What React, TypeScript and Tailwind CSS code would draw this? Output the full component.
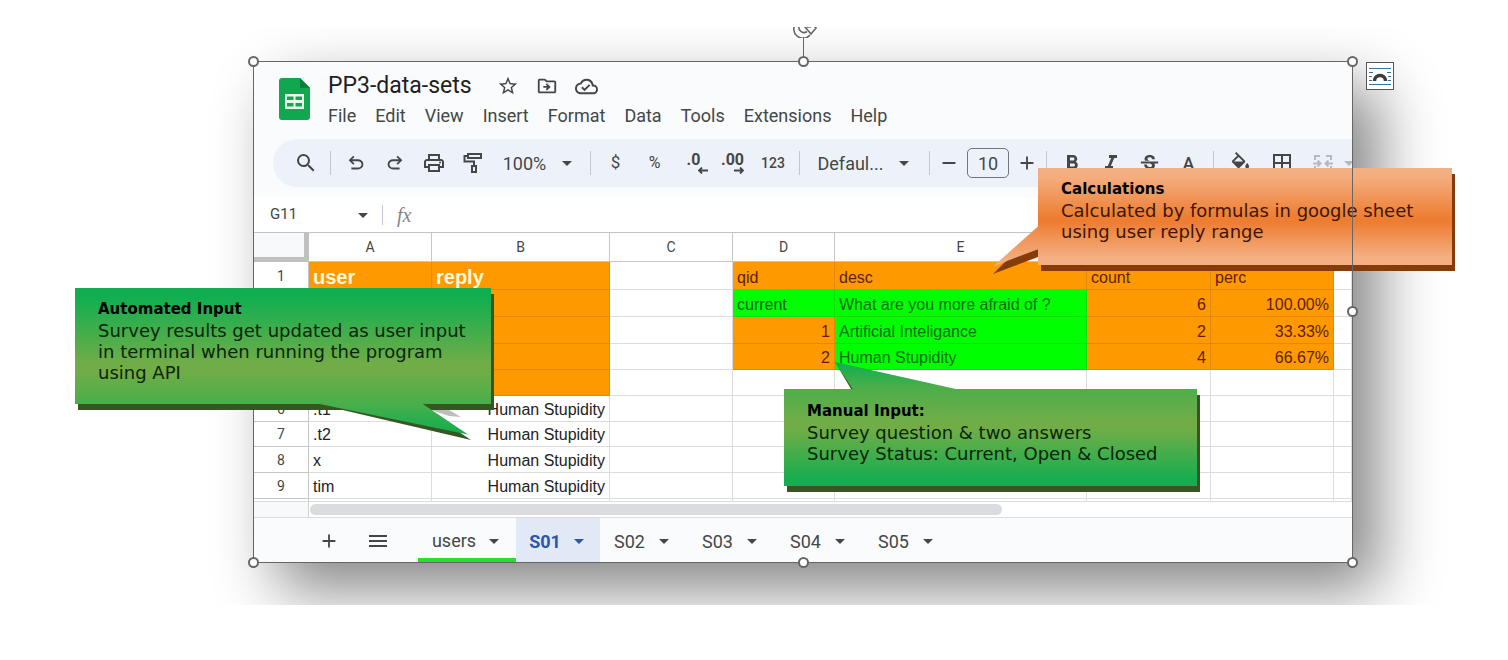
import type { ReactNode } from "react";
import {
  MdAdd,
  MdArrowDropDown,
  MdBorderAll,
  MdFormatBold,
  MdFormatColorFill,
  MdFormatItalic,
  MdMenu,
  MdOutlineCloudDone,
  MdOutlineDriveFileMove,
  MdOutlinePrint,
  MdRemove,
  MdSearch,
  MdStarBorder,
  MdStrikethroughS,
} from "react-icons/md";

const menus = ["File", "Edit", "View", "Insert", "Format", "Data", "Tools", "Extensions", "Help"];
const tabs = ["S02", "S03", "S04", "S05"];
const columns = ["A", "B", "C", "D", "E", "", "", ""];

type Row = { n: number; label: string; height: string; cells: string[] };

const rows: Row[] = [
  { n: 1, label: "1", height: "h-[28px]", cells: ["user", "reply", "", "qid", "desc", "count", "perc", ""] },
  { n: 2, label: "", height: "h-[27px]", cells: ["", "", "", "current", "What are you more afraid of ?", "6", "100.00%", ""] },
  { n: 3, label: "", height: "h-[27px]", cells: ["", "", "", "1", "Artificial Inteligance", "2", "33.33%", ""] },
  { n: 4, label: "", height: "h-[26px]", cells: ["", "", "", "2", "Human Stupidity", "4", "66.67%", ""] },
  { n: 5, label: "", height: "h-[26px]", cells: ["", "", "", "", "", "", "", ""] },
  { n: 6, label: "6", height: "h-[26px]", cells: [".t1", "Human Stupidity", "", "", "", "", "", ""] },
  { n: 7, label: "7", height: "h-[25px]", cells: [".t2", "Human Stupidity", "", "", "", "", "", ""] },
  { n: 8, label: "8", height: "h-[26px]", cells: ["x", "Human Stupidity", "", "", "", "", "", ""] },
  { n: 9, label: "9", height: "h-[26px]", cells: ["tim", "Human Stupidity", "", "", "", "", "", ""] },
];

function cellStyle(row: number, col: number): string {
  const orange = "bg-[#ff9900] border-[#e08a08]";
  const green = "bg-[#00ff00] border-[#0ce00c]";
  let style = "border-[#dcdcdc] text-[#222]";
  if (col < 2 && row <= 5) style = `${orange} text-[#222]`;
  if (col >= 3 && col <= 6 && row <= 4) style = `${orange} text-[#5b1f00]`;
  if (col === 3 && row === 2) style = `${green} text-[#0b5d10]`;
  if (col === 4 && row >= 2 && row <= 4) style = `${green} text-[#0b6d10]`;
  if (row === 1 && col < 2) return `${orange} text-[20px] font-bold text-[#fff8dc]`;
  const right =
    (col === 1 && row >= 6) || (col === 3 && row > 2) || (col > 4 && row > 1);
  return `${style} text-[16px] ${right ? "text-right" : "text-left"}`;
}

function Tool({ label, width = "w-[39px]", children }: { label: string; width?: string; children: ReactNode }) {
  return (
    <button type="button" aria-label={label} className={`flex h-[36px] shrink-0 items-center justify-center ${width}`}>
      {children}
    </button>
  );
}

function Separator() {
  return <span className="mx-[5px] h-[24px] w-px shrink-0 bg-[#c3c7cf]" />;
}

function Caret() {
  return <MdArrowDropDown size={24} className="shrink-0" />;
}

function UndoIcon({ flip = false }: { flip?: boolean }) {
  return (
    <svg viewBox="0 -960 960 960" className={`size-[22px] ${flip ? "-scale-x-100" : ""}`} fill="currentColor">
      <path d="M280-200v-80h284q63 0 109.500-40T720-420q0-60-46.500-100T564-560H312l104 104-56 56-200-200 200-200 56 56-104 104h252q97 0 169.500 63T800-420q0 94-72.500 157T564-200H280Z" />
    </svg>
  );
}

function RollerIcon() {
  return (
    <svg viewBox="0 0 24 24" className="size-[24px]" fill="none" stroke="currentColor" strokeWidth="2">
      <path d="M7 3h13v4H7zM7 5H3.500v5.500H13V15M11 15h4v6h-4z" />
    </svg>
  );
}

function DecimalIcon({ digits, right = false }: { digits: string; right?: boolean }) {
  return (
    <span className="flex flex-col items-end">
      <span className="text-[16px] leading-[15px] font-bold">{digits}</span>
      <svg viewBox="0 0 10 7" className={`h-[7px] w-[10px] ${right ? "-scale-x-100" : "-mr-2"}`} fill="none" stroke="currentColor" strokeWidth="1.800">
        <path d="M10 3.500H1M4 .5l-3 3 3 3" />
      </svg>
    </span>
  );
}

function MergeIcon() {
  return (
    <svg viewBox="0 0 24 24" className="size-[24px]" fill="none" stroke="currentColor" strokeWidth="2">
      <path d="M9 5H4v4M15 5h5v4M9 19H4v-4M15 19h5v-4M2 12.500h7M6.500 9.500l3 3-3 3M22 12.500h-7M17.500 9.500l-3 3 3 3" />
    </svg>
  );
}

function SheetsLogo() {
  return (
    <svg viewBox="0 0 31 42" className="h-[42px] w-[31px] shrink-0">
      <path d="M3 0h18l10 10v29a3 3 0 0 1-3 3H3a3 3 0 0 1-3-3V3a3 3 0 0 1 3-3z" fill="#0fa84e" />
      <path d="M21 0l10 10H21z" fill="#0b7e3b" />
      <path d="M6 16h19v15H6z" fill="#e9f8ee" />
      <path d="M8 18.500h6.500v3.500H8zM16.500 18.500H23V22h-6.500zM8 25h6.500v3.500H8zM16.500 25H23v3.500h-6.500z" fill="#0fa84e" />
    </svg>
  );
}

function Handle({ place }: { place: string }) {
  return <span className={`absolute z-30 size-[11px] rounded-full border-2 border-[#666] bg-white ${place}`} />;
}

function Callout({ title, lines, box, tail }: { title: string; lines: string[]; box: string; tail: ReactNode }) {
  return (
    <aside className={`absolute z-10 pl-[23px] font-['DejaVu_Sans',sans-serif] text-[18px] leading-[21px] whitespace-nowrap ${box}`}>
      {tail}
      <h2 className="relative text-[15px] font-bold text-black">{title}</h2>
      {lines.map((line) => (
        <p key={line} className="relative">{line}</p>
      ))}
    </aside>
  );
}

export default function App() {
  return (
    <main className="bg-white py-[27px] font-[Roboto,sans-serif] text-[#444746]">
      <div className="overflow-hidden pt-[34px] pr-[155px] pb-[42px] pl-[253px]">
        <div className="relative shadow-[25px_27px_58px_rgba(0,0,0,0.48)]">
          <section className="overflow-hidden border border-[#666] bg-[#f9fbfd]">
            <header className="flex h-[77px] gap-[18px] pt-[16px] pl-[25px]">
              <SheetsLogo />
              <div className="-mt-[6px]">
                <div className="flex h-[28px] items-center">
                  <h1 className="mr-[25px] text-[23px] text-[#1f1f1f]">PP3-data-sets</h1>
                  <div className="flex gap-[17px]">
                    <button type="button" aria-label="Star"><MdStarBorder size={22} /></button>
                    <button type="button" aria-label="Move"><MdOutlineDriveFileMove size={22} /></button>
                    <button type="button" aria-label="Saved to cloud"><MdOutlineCloudDone size={23} /></button>
                  </div>
                </div>
                <nav className="flex h-[30px] items-center gap-[19px] text-[18px]">
                  {menus.map((menu) => (
                    <button key={menu} type="button">{menu}</button>
                  ))}
                </nav>
              </div>
            </header>

            <div className="ml-[19px] flex h-[48px] items-center overflow-hidden rounded-l-full bg-[#edf2fa] pl-[13px]">
              <Tool label="Search"><MdSearch size={24} /></Tool>
              <Separator />
              <Tool label="Undo"><UndoIcon /></Tool>
              <Tool label="Redo"><UndoIcon flip /></Tool>
              <Tool label="Print"><MdOutlinePrint size={24} /></Tool>
              <Tool label="Paint format"><RollerIcon /></Tool>
              <Tool label="Zoom" width="w-[93px]">
                <span className="pl-[5px] text-[18px]">100%</span>
                <span className="ml-[9px]"><Caret /></span>
              </Tool>
              <Separator />
              <Tool label="Currency"><span className="text-[17px]">$</span></Tool>
              <Tool label="Percent"><span className="text-[16px]">%</span></Tool>
              <Tool label="Decrease decimals"><DecimalIcon digits=".0" /></Tool>
              <Tool label="Increase decimals"><DecimalIcon digits=".00" right /></Tool>
              <Tool label="Number format" width="w-[42px]"><span className="text-[14px] font-medium">123</span></Tool>
              <Separator />
              <Tool label="Font" width="w-[119px]">
                <span className="pl-[5px] text-[18px]">Defaul...</span>
                <span className="ml-[9px]"><Caret /></span>
              </Tool>
              <Separator />
              <Tool label="Smaller" width="w-[28px]"><MdRemove size={22} /></Tool>
              <input aria-label="Font size" defaultValue="10" className="mx-1 h-[30px] w-[42px] shrink-0 rounded-[5px] border border-[#74777a] text-center text-[18px]" />
              <Tool label="Larger" width="w-[28px]"><MdAdd size={22} /></Tool>
              <Separator />
              <Tool label="Bold"><MdFormatBold size={24} /></Tool>
              <Tool label="Italic"><MdFormatItalic size={24} /></Tool>
              <Tool label="Strikethrough"><MdStrikethroughS size={23} /></Tool>
              <Tool label="Text colour"><span className="text-[18px] font-medium">A</span></Tool>
              <Separator />
              <Tool label="Fill colour" width="w-[42px]"><MdFormatColorFill size={23} /></Tool>
              <Tool label="Borders" width="w-[42px]"><MdBorderAll size={24} /></Tool>
              <span className="flex shrink-0 text-[#b5b8be]">
                <Tool label="Merge"><MergeIcon /></Tool>
                <Tool label="Merge options" width="w-[14px]"><Caret /></Tool>
              </span>
            </div>

            <div className="mt-[10px] flex h-[36px] items-center border-b border-[#c0c3c7] bg-white pl-[16px]">
              <input aria-label="Name box" defaultValue="G11" className="w-[81px] text-[15px]" />
              <Caret />
              <span className="mr-[14px] ml-[7px] h-[20px] w-px bg-[#c3c7cf]" />
              <span className="font-['Liberation_Serif',serif] text-[20px] text-[#80868b] italic">fx</span>
              <input aria-label="Formula" className="ml-2 min-w-0 flex-1" />
            </div>

            <div className="h-[269px] overflow-hidden border-b border-[#dcdcdc] bg-white">
              <table className="w-full table-fixed border-separate border-spacing-0 font-['Liberation_Sans',sans-serif]">
                <colgroup>
                  <col className="w-[55px]" />
                  <col className="w-[123px]" />
                  <col className="w-[178px]" />
                  <col className="w-[123px]" />
                  <col className="w-[102px]" />
                  <col className="w-[252px]" />
                  <col className="w-[124px]" />
                  <col className="w-[123px]" />
                  <col />
                </colgroup>
                <thead>
                  <tr className="h-[29px]">
                    <th className="border-r-[5px] border-b-[5px] border-[#c0c0c0] bg-[#f8f9fa] p-0" />
                    {columns.map((name, i) => (
                      <th key={i} className="border-r border-b border-[#c6c6c6] p-0 font-[Roboto,sans-serif] text-[14px] font-normal text-[#444746]">{name}</th>
                    ))}
                  </tr>
                </thead>
                <tbody>
                  {rows.map((row) => (
                    <tr key={row.n} className={row.height}>
                      <th className="border-r border-b border-[#c6c6c6] p-0 text-center font-[Roboto,sans-serif] text-[14px] leading-[20px] font-normal">{row.label}</th>
                      {row.cells.map((text, i) => (
                        <td key={i} className={`overflow-hidden border-r border-b px-[4px] py-0 align-bottom leading-[23px] whitespace-nowrap ${cellStyle(row.n, i)}`}>{text}</td>
                      ))}
                    </tr>
                  ))}
                  <tr className="h-[12px]">
                    <th className="border-r border-[#c6c6c6] p-0" />
                    {columns.map((name, i) => (
                      <td key={i} className="border-r border-[#dcdcdc] p-0" />
                    ))}
                  </tr>
                </tbody>
              </table>
            </div>

            <div className="flex h-[16px] items-center border-b border-[#dcdcdc] bg-white">
              <span className="h-full w-[55px] border-r border-[#d0d0d0] bg-[#f8f9fa]" />
              <span className="ml-[1px] h-[11px] w-[63%] rounded-full bg-[#dadce0]" />
            </div>

            <footer className="flex h-[44px] text-[18px]">
              <button type="button" aria-label="Add sheet" className="ml-[50px] flex w-[49px] items-center justify-center pt-[2px]"><MdAdd size={22} /></button>
              <button type="button" aria-label="All sheets" className="flex w-[49px] items-center justify-center pt-[2px]"><MdMenu size={24} /></button>
              <button type="button" className="ml-[16px] flex w-[98px] items-center justify-center gap-[6px] border-b-4 border-[#25df2b] pt-[5px] pl-[4px]">
                users<Caret />
              </button>
              <button type="button" className="flex w-[84px] items-center justify-center gap-[6px] bg-[#e1e9f7] pt-[2px] pl-[4px] font-bold text-[#2a56b0]">
                S01<Caret />
              </button>
              {tabs.map((tab) => (
                <button key={tab} type="button" className="flex w-[88px] items-center justify-center gap-[7px] pt-[2px] pl-[2px]">
                  {tab}<Caret />
                </button>
              ))}
            </footer>
          </section>

          <Callout
            title="Automated Input"
            lines={["Survey results get updated as user input", "in terminal when running the program", "using API"]}
            box="top-[227px] left-[-178px] h-[116px] w-[416px] bg-[linear-gradient(#10ae50_0px,#12ae50_10px,#70ad47_76px,#70ad47_84px,#48af4b_116px)] pt-[11px] text-[#0c2408] shadow-[3px_6px_0_#375623]"
            tail={
              <svg viewBox="0 0 416 160" className="absolute top-0 left-0 h-[160px] w-[416px] overflow-visible">
                <defs>
                  <linearGradient id="tail-auto" x1="0" y1="116" x2="0" y2="146" gradientUnits="userSpaceOnUse">
                    <stop offset="0" stopColor="#48af4b" />
                    <stop offset="1" stopColor="#10ae50" />
                  </linearGradient>
                </defs>
                <path d="M356 122h18l12 7-12-1z" fill="#bdbdbd" />
                <path d="M242 116l154 36-12-8-30-20z" fill="#375623" />
                <path d="M242 115.500h105l46 31z" fill="url(#tail-auto)" />
              </svg>
            }
          />
          <Callout
            title="Manual Input:"
            lines={["Survey question & two answers", "Survey Status: Current, Open & Closed"]}
            box="top-[328px] left-[531px] h-[97px] w-[413px] bg-[linear-gradient(#4eae4a_0px,#70ad47_32px,#70ad47_40px,#12ae50_92px)] pt-[12px] text-[#0c2408] shadow-[3px_6px_0_#375623]"
            tail={
              <svg viewBox="0 0 413 97" className="absolute top-0 left-0 h-[97px] w-[413px] overflow-visible">
                <defs>
                  <linearGradient id="tail-manual" x1="0" y1="-27" x2="0" y2="0" gradientUnits="userSpaceOnUse">
                    <stop offset="0" stopColor="#10ae50" />
                    <stop offset="1" stopColor="#4eae4a" />
                  </linearGradient>
                </defs>
                <path d="M51-27l16 27h3z" fill="#375623" />
                <path d="M51-27L174 .5H69z" fill="url(#tail-manual)" />
              </svg>
            }
          />
          <Callout
            title="Calculations"
            lines={["Calculated by formulas in google sheet", "using user reply range"]}
            box="top-[107px] left-[785px] h-[97px] w-[414px] bg-[linear-gradient(#f4b083_0px,#f4ac7d_10px,#ed7d31_50px,#ed7d31_54px,#f4b083_90px)] pt-[11px] text-[#3f1500] shadow-[3px_6px_0_#843c0c]"
            tail={
              <svg viewBox="0 0 414 110" className="absolute top-0 left-0 h-[110px] w-[414px] overflow-visible">
                <defs>
                  <linearGradient id="tail-calc" x1="0" y1="56" x2="0" y2="96" gradientUnits="userSpaceOnUse">
                    <stop offset="0" stopColor="#ee8541" />
                    <stop offset="1" stopColor="#f4b083" />
                  </linearGradient>
                </defs>
                <path d="M0 81v8l-45 17 15-15z" fill="#843c0c" />
                <path d="M.5 58v23l-29 11-17 7z" fill="url(#tail-calc)" />
              </svg>
            }
          />

          <span className="pointer-events-none absolute inset-y-0 right-0 z-20 w-px bg-[#666]" />
          <span className="absolute -top-[24px] left-1/2 z-20 h-[24px] w-px bg-[#666]" />
          <svg viewBox="0 0 24 24" className="absolute -top-[47px] left-1/2 z-20 -ml-[10px] size-[24px]" fill="none" stroke="#666" strokeWidth="1.600">
            <path d="M17 21a9 9 0 0 1-14-12M14 17.500a5 5 0 0 1-7-7" />
            <path d="M12 13h5v-5l6 6-5 6z" fill="white" />
          </svg>
          <Handle place="-top-[5px] -left-[5px]" />
          <Handle place="-top-[5px] left-1/2 -ml-[5px]" />
          <Handle place="-top-[5px] -right-[5px]" />
          <Handle place="top-1/2 -right-[5px] -mt-[6px]" />
          <Handle place="-bottom-[5px] -left-[5px]" />
          <Handle place="-bottom-[5px] left-1/2 -ml-[5px]" />
          <Handle place="-right-[5px] -bottom-[5px]" />
          <button type="button" aria-label="Layout options" className="absolute top-[1px] -right-[41px] flex size-[28px] items-center justify-center border border-[#555] bg-white">
            <svg viewBox="0 0 24 24" className="size-[24px]" fill="none">
              <path d="M1 4.500h22M1 8.500h4M19 8.500h4M1 12.500h3M20 12.500h3M1 16.500h3M20 16.500h3M1 20.500h22" stroke="#2e75a8" />
              <path d="M6.500 17a5.500 5.500 0 0 1 11 0" stroke="#3b3b3b" strokeWidth="3.500" />
            </svg>
          </button>
        </div>
      </div>
    </main>
  );
}
